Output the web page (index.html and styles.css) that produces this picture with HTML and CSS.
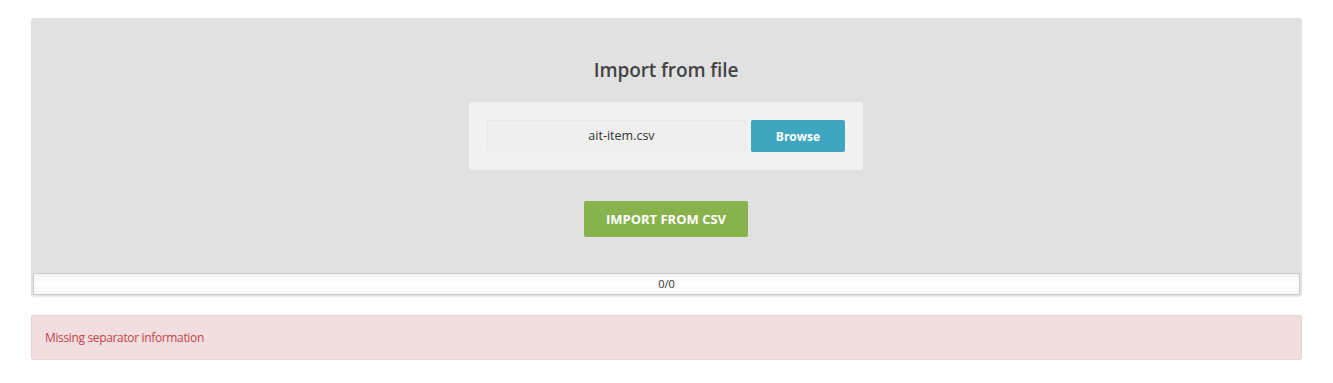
FILE: index.html
```html
<!DOCTYPE html>
<html>
<head>
<meta charset="utf-8">
<link rel="stylesheet" href="styles.css">
</head>
<body>
<div class="page">
  <section class="panel">
    <h2 class="title">Import from file</h2>
    <div class="filebox">
      <div class="filename">ait-item.csv</div>
      <button class="browse">Browse</button>
    </div>
    <button class="import">IMPORT FROM CSV</button>
    <div class="progress"><span>0/0</span></div>
  </section>
  <div class="alert">Missing separator information</div>
</div>
</body>
</html>
```
FILE: styles.css
```css
* { box-sizing: border-box; }
html, body { margin: 0; padding: 0; background: #fff; }
body { font-family: "Open Sans", "Noto Sans", sans-serif; color: #333; }
.page { padding: 18px 31px 0 31px; }
.panel {
  background: #e1e1e1;
  border-radius: 3px;
  height: 278px;
  display: flex;
  flex-direction: column;
  align-items: center;
  padding: 0 3px 1px 2px;
  box-shadow: 0 1px 1px rgba(0,0,0,0.08);
}
.title {
  margin: 38px 0 0 0;
  font-size: 19px;
  line-height: 28px;
  font-weight: 600;
  color: #444;
  letter-spacing: -0.1px;
}
.filebox {
  margin-top: 18px;
  width: 394px;
  height: 68px;
  background: #f1f1f1;
  border-radius: 3px;
  padding: 18px;
  display: flex;
  gap: 5px;
  align-items: flex-start;
}
.filename {
  width: 259px;
  height: 31px;
  background: #efefef;
  border: 1px solid #e9e9e9;
  border-radius: 2px;
  text-align: center;
  padding-left: 10px;
  font-size: 12.5px;
  line-height: 29px;
  color: #333;
}
.browse {
  width: 94px;
  height: 32px;
  border: none;
  border-radius: 2px;
  background: #3ea6bf;
  color: #fff;
  font-family: "Open Sans", sans-serif;
  font-weight: 700;
  font-size: 12px;
  padding: 0;
}
.import {
  margin-top: 31px;
  width: 164px;
  height: 36px;
  border: none;
  border-radius: 2px;
  background: #88b24c;
  color: #fff;
  font-family: "Open Sans", sans-serif;
  font-weight: 700;
  font-size: 13px;
  padding: 0;
}
.progress {
  margin-top: auto;
  margin-right: -1px;
  align-self: stretch;
  height: 22px;
  border: 1px solid #cbcbcb;
  background: linear-gradient(#f4f4f4, #ffffff 50%, #f6f6f6);
  text-align: center;
  font-size: 11px;
  line-height: 20px;
  color: #333;
}
.alert {
  margin-top: 19px;
  height: 45px;
  background: #f2dede;
  border: 1px solid #ebd0d3;
  border-radius: 2px;
  padding: 0 13px;
  font-size: 12px;
  letter-spacing: -0.35px;
  line-height: 43px;
  color: #c4424a;
}
```
